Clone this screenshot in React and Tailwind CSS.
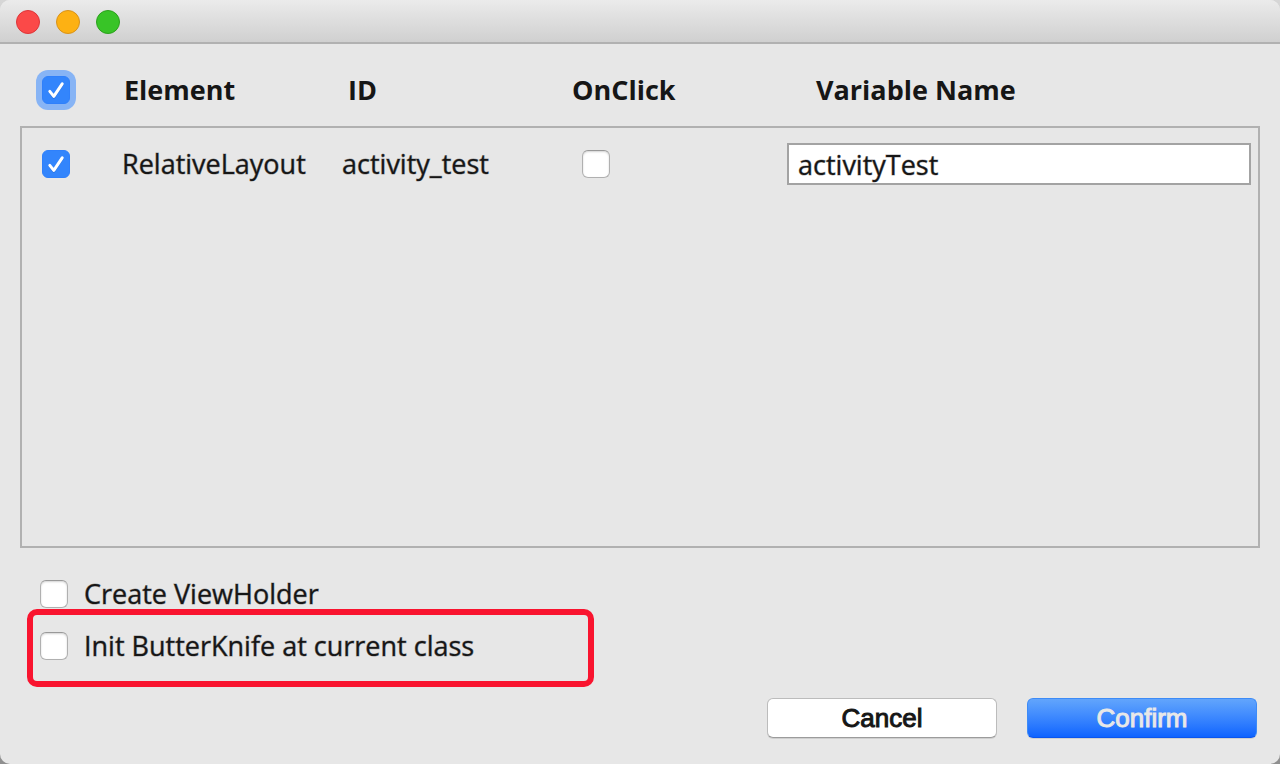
import { useState } from "react";

function Tick() {
  return (
    <svg
      viewBox="0 0 28 28"
      aria-hidden="true"
      className="pointer-events-none col-start-1 row-start-1 size-7"
    >
      <path
        d="M7.8 16 L11.8 21.3 L20.2 8.8"
        fill="none"
        stroke="#1d5fc4"
        strokeOpacity="0.5"
        strokeWidth="2.8"
        strokeLinecap="round"
        strokeLinejoin="round"
      />
      <path
        d="M7.8 15.4 L11.8 20.4 L20.2 7.8"
        fill="none"
        stroke="#fff"
        strokeWidth="3"
        strokeLinecap="round"
        strokeLinejoin="round"
      />
    </svg>
  );
}

function Checkbox({ id, label, initial = false, focused = false }) {
  const [on, setOn] = useState(initial);
  const look = on
    ? "border-[#2f80fb] bg-[#3385fc]"
    : "border-[#b0b0b0] border-t-[#999999] bg-white shadow-[inset_0_1px_2px_rgba(0,0,0,0.18)]";
  return (
    <span className="grid size-7 shrink-0">
      <input
        type="checkbox"
        id={id}
        aria-label={label}
        checked={on}
        onChange={() => setOn(!on)}
        className={
          "col-start-1 row-start-1 size-7 appearance-none rounded-md border outline-none " +
          look +
          (focused ? " ring-6 ring-[#87b4f5]" : "")
        }
      />
      {on && <Tick />}
    </span>
  );
}

function TitleBar() {
  return (
    <header className="flex h-11 items-center gap-4 border-b-2 border-[#b1b1b1] bg-linear-to-b from-[#ebebeb] to-[#d0d0d0] px-4 pt-0.5">
      <button aria-label="Close" className="size-6 rounded-full border border-[#dd3539] bg-[#fb4948]" />
      <button aria-label="Minimize" className="size-6 rounded-full border border-[#d8921a] bg-[#fdb113]" />
      <button aria-label="Zoom" className="size-6 rounded-full border border-[#2ca01d] bg-[#38c427]" />
    </header>
  );
}

const rows = [{ element: "RelativeLayout", id: "activity_test", name: "activityTest" }];

function ElementTable() {
  return (
    <table className="mx-5 flex flex-1 flex-col text-left">
      <thead className="block">
        <tr className="grid h-[82px] grid-cols-[82px_224px_224px_244px_1fr] items-center pl-[22px] pt-2.5 font-bold">
          <th>
            <Checkbox label="Select all" initial focused />
          </th>
          <th>Element</th>
          <th>ID</th>
          <th>OnClick</th>
          <th>Variable Name</th>
        </tr>
      </thead>
      <tbody className="block flex-1 border-2 border-[#b1b1b1] pt-[15px] [-webkit-text-stroke:1px_rgba(22,22,22,0.4)]">
        {rows.map((row) => (
          <tr
            key={row.id}
            className="grid grid-cols-[80px_220px_240px_205px_1fr] items-center pl-5 pr-[7px]"
          >
            <td>
              <Checkbox label={"Select " + row.element} initial />
            </td>
            <td>{row.element}</td>
            <td>{row.id}</td>
            <td>
              <Checkbox label={"OnClick for " + row.element} />
            </td>
            <td>
              <input
                type="text"
                aria-label="Variable name"
                defaultValue={row.name}
                className="block h-[42px] w-full border-2 border-[#a3a3a3] bg-white px-[9px] outline-none"
              />
            </td>
          </tr>
        ))}
      </tbody>
    </table>
  );
}

function Option({ id, text }) {
  return (
    <div className="flex h-7 items-center gap-4 [-webkit-text-stroke:1px_rgba(22,22,22,0.4)]">
      <Checkbox id={id} />
      <label htmlFor={id}>{text}</label>
    </div>
  );
}

export default function App() {
  return (
    <div className="min-h-screen bg-linear-to-b from-[#d6d6d6] to-[#8f8f8f]">
      <main className="flex min-h-screen flex-col overflow-hidden rounded-[10px] bg-[#e7e7e7] font-['Open_Sans','Noto_Sans',sans-serif] text-[27px] leading-7 text-[#161616]">
        <TitleBar />
        <ElementTable />
        <div className="mt-8 pl-10">
          <Option id="create-view-holder" text="Create ViewHolder" />
        </div>
        <div className="ml-[27px] mt-px w-[567px] max-w-full rounded-[10px] border-6 border-[#f9142f] pb-[21px] pl-[7px] pt-[17px]">
          <Option id="init-butter-knife" text="Init ButterKnife at current class" />
        </div>
        <footer className="mb-[26px] mt-[11px] flex justify-end gap-[30px] pr-[23px] font-['Liberation_Sans',Arial,sans-serif] text-[26px]">
          <button className="h-10 w-[230px] rounded-md border border-[#bcbcbc] border-b-[#9c9c9c] bg-white [-webkit-text-stroke:1px] shadow-[0_1px_0_rgba(0,0,0,0.1)]">
            Cancel
          </button>
          <button className="h-10 w-[230px] rounded-md border border-[#3d8bf7] border-b-[#0a55ee] bg-linear-to-b from-[#62a5fc] to-[#0d63ff] text-[#e8e8e8] [-webkit-text-stroke:1px] shadow-[0_1px_0_rgba(0,0,0,0.1)]">
            Confirm
          </button>
        </footer>
      </main>
    </div>
  );
}
